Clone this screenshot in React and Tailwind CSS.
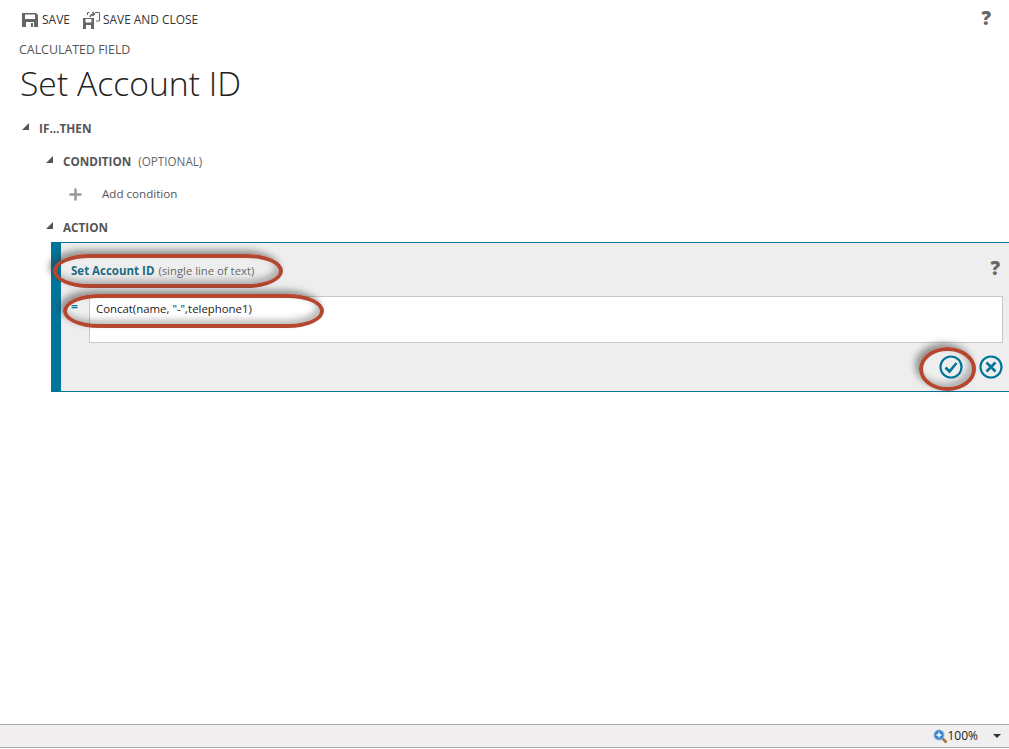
import { Plus } from "lucide-react";

const FONT = "font-['Open_Sans','Noto_Sans',sans-serif]";

function SaveIcon() {
  return (
    <svg width="16" height="16" viewBox="0 0 16 16" aria-hidden="true">
      <path fillRule="evenodd" fill="#666" d="M0 1h14l2 2v12H0V1zm3 1.5v4.5h10V2.5H3zM4 10v5h8v-5H4z" />
      <rect x="9" y="11" width="2" height="4" fill="#666" />
    </svg>
  );
}

function SaveCloseIcon() {
  return (
    <svg width="17" height="18" viewBox="0 0 17 18" aria-hidden="true">
      <path fillRule="evenodd" fill="#666" d="M0 7h11v11H0V7zm2.5 1v3.5h6V8h-6zM3 14v4h5v-4H3z" />
      <path fill="none" stroke="#666" d="M4.5 4V1.5h2M12 1.5h4.5V10H13" />
      <path fill="none" stroke="#666" strokeWidth="1.4" d="M7 6c.5-2 2-3 4-3M9.5 1l2 2-2 2" />
    </svg>
  );
}

function Caret() {
  return (
    <svg className="mb-[6px]" width="7" height="7" viewBox="0 0 7 7" aria-hidden="true">
      <path d="M7 0v7H0z" fill="#555" />
    </svg>
  );
}

function Oval({ className }) {
  return (
    <div
      className={`absolute border-[4px] border-[#b5462f] shadow-[-4px_-4px_6px_rgba(60,60,60,0.5),inset_-4px_-4px_6px_rgba(60,60,60,0.35)] pointer-events-none ${className}`}
    />
  );
}

function RoundIcon({ children }) {
  return (
    <svg width="24" height="24" viewBox="0 0 24 24" fill="none" stroke="#00759b" aria-hidden="true">
      <circle cx="12" cy="12" r="10.5" strokeWidth="2.2" />
      {children}
    </svg>
  );
}

export default function App() {
  return (
    <div className={`${FONT} relative flex h-[749px] flex-col overflow-hidden bg-white text-[#555]`}>
      {/* Command bar */}
      <div className="flex h-[40px] items-center pl-[22px] pr-[18px] text-[12px] text-[#333]">
        <SaveIcon />
        <span className="ml-[4px]">SAVE</span>
        <span className="ml-[13px]"><SaveCloseIcon /></span>
        <span className="ml-[3px] text-[11.9px]">SAVE AND CLOSE</span>
        <span className="ml-auto mb-[4px] text-[19px] font-extrabold leading-none text-[#666]">?</span>
      </div>

      <div className="pl-[19px] text-[12.4px] leading-[20px] text-[#555]">CALCULATED FIELD</div>
      <h1 className="pl-[20px] text-[33.7px] font-light leading-[46px] text-[#222]">Set Account ID</h1>

      {/* If / then tree */}
      <div className="mt-[13px] flex h-[20px] items-center gap-[10px] pl-[22px] text-[11.8px] font-bold">
        <Caret />
        <span>IF...THEN</span>
      </div>
      <div className="mt-[13px] flex h-[20px] items-center pl-[46px] text-[11.7px]">
        <Caret />
        <span className="ml-[10px] font-bold">CONDITION</span>
        <span className="ml-[7px] text-[#666]">(OPTIONAL)</span>
      </div>
      <div className="mt-[12px] flex h-[20px] items-center pl-[67px] text-[11.6px] text-[#555]">
        <Plus size={17} strokeWidth={3.5} className="text-[#999]" />
        <span className="ml-[18px]">Add condition</span>
      </div>
      <div className="mt-[14px] flex h-[20px] items-center pl-[46px] text-[11.7px] font-bold">
        <Caret />
        <span className="ml-[10px]">ACTION</span>
      </div>

      {/* Action editor */}
      <div className="ml-[51px] mt-[4px] flex h-[150px] border-y border-[#00759b] bg-[#eeeeee]">
        <div className="w-[10px] bg-[#00759b]" />
        <div className="flex-1">
          <div className="flex h-[53px] items-center justify-between pl-[10px] pr-[9px] pt-[2px] text-[11.5px]">
            <div>
              <span className="font-bold text-[#1a6a86]">Set Account ID</span>
              <span className="ml-[4px] text-[11.3px] text-[#666]">(single line of text)</span>
            </div>
            <span className="mb-[4px] text-[19px] font-extrabold leading-none text-[#666]">?</span>
          </div>
          <div className="flex pr-[6px]">
            <span className="w-[28px] pl-[10px] text-[12px] font-bold leading-[22px] text-[#00759b]">=</span>
            <div className="h-[47px] flex-1 border border-[#c8c8c8] bg-white px-[6px] py-[2px] text-[11.4px] leading-[20px] text-[#222]">
              Concat(name, "-",telephone1)
            </div>
          </div>
          <div className="mt-[12px] flex justify-end gap-[16px] pr-[6px]">
            <RoundIcon>
              <path d="M6.5 12.5l4 4 7-8.5" strokeWidth="2.6" />
            </RoundIcon>
            <RoundIcon>
              <path d="M7.5 7.5l9 9M16.5 7.5l-9 9" strokeWidth="2.6" />
            </RoundIcon>
          </div>
        </div>
      </div>

      {/* Status bar */}
      <div className="mt-auto mb-[1px] flex h-[24px] items-center border-y border-[#aaa] bg-[#f0eeee] pr-[8px] text-[12px] text-[#222]">
        <div className="ml-auto flex items-center">
          <svg width="15" height="15" viewBox="0 0 15 15" aria-hidden="true">
            <path d="M9.5 9.5l4 4" stroke="#a5703a" strokeWidth="2.5" />
            <circle cx="6" cy="6" r="5" fill="#3a84d0" stroke="#8db4dc" />
            <path d="M3.5 6h5M6 3.5v5" stroke="#fff" strokeWidth="1.5" />
          </svg>
          <span className="ml-[-1px]">100%</span>
          <svg className="ml-[15px]" width="8" height="4" viewBox="0 0 8 4" aria-hidden="true">
            <path d="M0 0h8L4 4z" fill="#333" />
          </svg>
        </div>
      </div>

      {/* Red annotations drawn over the screenshot */}
      <Oval className="left-[53px] top-[254px] h-[34px] w-[230px] rounded-[36px/17px]" />
      <Oval className="left-[63px] top-[294px] h-[34px] w-[261px] rounded-[36px/17px]" />
      <Oval className="left-[919px] top-[347px] h-[44px] w-[57px] rounded-[50%]" />
    </div>
  );
}
